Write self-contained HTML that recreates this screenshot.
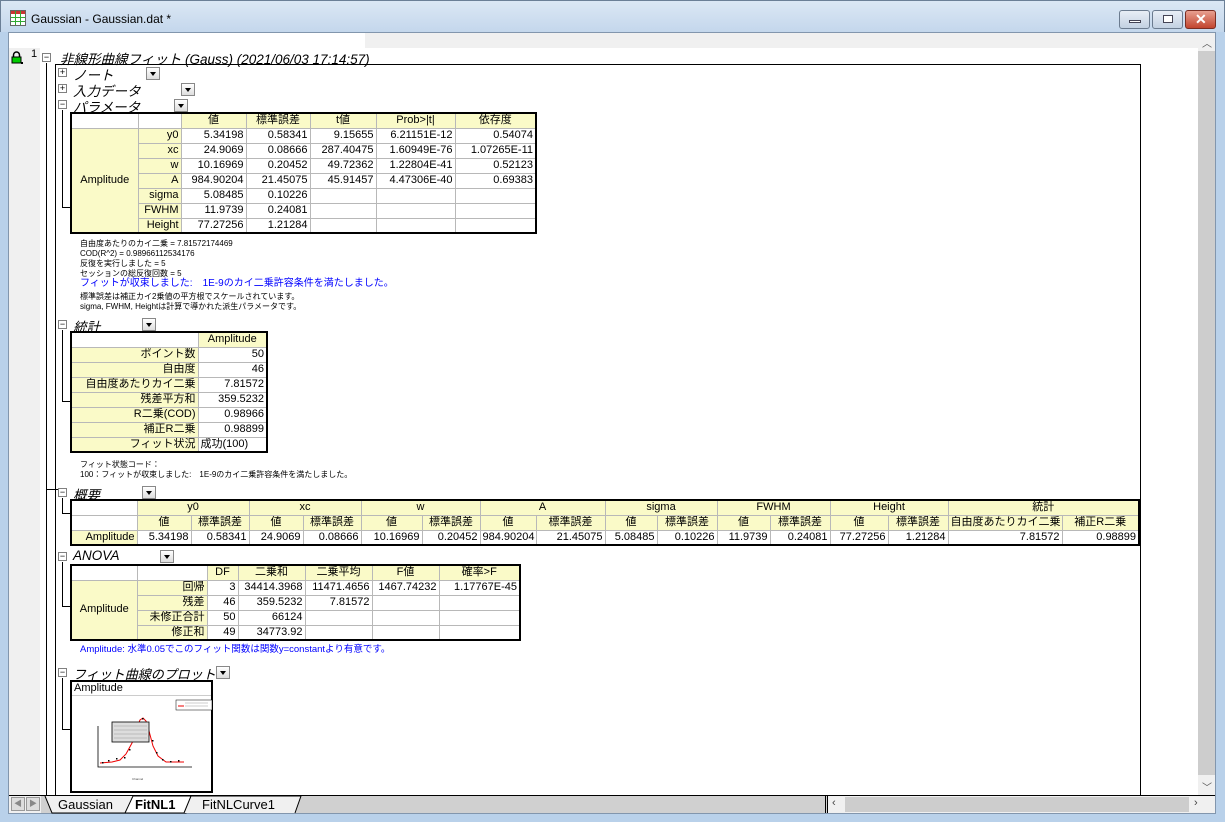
<!DOCTYPE html>
<html><head><meta charset="utf-8">
<style>
*{margin:0;padding:0;box-sizing:border-box}
body{width:1225px;height:822px;overflow:hidden;background:#b9d1ea;font-family:"Liberation Sans","Noto Sans CJK JP",sans-serif;position:relative}
.abs{position:absolute}
#title{left:0;top:0;width:1225px;height:32px;background:linear-gradient(#dbe7f4,#c4d7ec);border:1px solid #6b7f96;border-bottom:none}
#title span{position:absolute;left:30px;top:11px;font-size:12px;color:#000}
.wb{position:absolute;top:9px;height:19px;border:1px solid #6b7b8f;border-radius:3px;background:linear-gradient(#e8eef6,#c3d1e2)}
#client{left:8px;top:32px;width:1208px;height:782px;background:#fff;border:1px solid #8296ad}
#lstrip{left:9px;top:48px;width:31px;height:747px;background:#f0f0f0}
#tstrip{left:365px;top:33px;width:833px;height:15px;background:#f0f0f0}
#vs{left:1198px;top:33px;width:17px;height:762px;background:#f0f0f0}
#hs{left:9px;top:795px;width:1206px;height:18px;background:#f0f0f0;border-top:1px solid #000}
.sec{position:absolute;font-style:italic;font-size:13.5px;color:#000;white-space:nowrap}
.pm{position:absolute;width:9px;height:9px;border:1px solid #808080;background:#fff;font-size:9px;line-height:7px;text-align:center;color:#000}
.dd{position:absolute;width:14px;height:13px;border:1px solid #888;background:linear-gradient(#fff,#ddd)}
.dd:after{content:"";position:absolute;left:3px;top:4px;border-left:3.5px solid transparent;border-right:3.5px solid transparent;border-top:4px solid #000}
.ln{position:absolute;background:#000}
table{position:absolute;border-collapse:collapse;table-layout:fixed;border:2px solid #000;font-size:11px;background:#fff}
td{border:1px solid #b8b8b8;height:15px;padding:0 2px;text-align:right;white-space:nowrap;overflow:hidden;line-height:13px}
.y{background:#fafac8}
.c{text-align:center}
.note{position:absolute;font-size:8px;line-height:10px;color:#000;white-space:nowrap}
.blue{color:#0000ff}
</style></head><body>
<div id="title" class="abs">
<svg class="abs" style="left:9px;top:9px" width="16" height="16"><rect x="0.5" y="0.5" width="15" height="15" fill="#fff" stroke="#666"/><rect x="1" y="1" width="14" height="3" fill="#c33"/><path d="M1 7.5H15M1 11.5H15M5.5 1V15M10.5 1V15" stroke="#3a3" /></svg>
<span>Gaussian - Gaussian.dat *</span>
<div class="wb" style="left:1118px;width:31px"><div class="abs" style="left:9px;top:9px;width:12px;height:3px;background:#fff;border:1px solid #445"></div></div>
<div class="wb" style="left:1151px;width:31px"><div class="abs" style="left:10px;top:4px;width:10px;height:8px;border:1px solid #445;background:#fff"></div></div>
<div class="wb" style="left:1184px;width:31px;background:linear-gradient(#e8a090,#c2452f);border-color:#7a2d22"><span style="position:absolute;left:9px;top:0;color:#fff;font-weight:bold;font-size:14px">✕</span></div>
</div>
<div id="client" class="abs"></div>
<div id="tstrip" class="abs"></div>
<div id="lstrip" class="abs"></div>
<div id="vs" class="abs"><div class="abs" style="left:0;top:18px;width:17px;height:724px;background:#cdcdcd"></div><span class="abs" style="left:4px;top:2px;font-size:10px;color:#555">︿</span><span class="abs" style="left:4px;top:746px;font-size:10px;color:#555">﹀</span></div>
<div id="hs" class="abs">
<div class="abs" style="left:2px;top:1px;width:14px;height:14px;border:1px solid #999;background:#ddd;font-size:8px;text-align:center;line-height:12px;color:#888">◀</div>
<div class="abs" style="left:17px;top:1px;width:14px;height:14px;border:1px solid #999;background:#ddd;font-size:8px;text-align:center;line-height:12px;color:#888">▶</div>
<div class="abs" style="left:32px;top:0;width:787px;height:17px;background:#d0d0d0"></div>
<svg class="abs" style="left:32px;top:0" width="270" height="18"><path d="M4 0L11 17H88L92 8L95 0" fill="#f0f0f0" stroke="#000"/><path d="M84 17L92 0H150L145 17Z" fill="#fff" stroke="#000"/><path d="M143 17L150 0H260L254 17" fill="#f0f0f0" stroke="#000"/></svg>
<span class="abs" style="left:49px;top:1px;font-size:13px">Gaussian</span>
<span class="abs" style="left:126px;top:1px;font-size:13px;font-weight:bold">FitNL1</span>
<span class="abs" style="left:193px;top:1px;font-size:13px">FitNLCurve1</span>
<div class="abs" style="left:816px;top:0;width:3px;height:17px;border-left:1px solid #000;border-right:1px solid #000"></div>
<div class="abs" style="left:836px;top:1px;width:344px;height:15px;background:#cdcdcd"></div>
<span class="abs" style="left:823px;top:1px;font-size:11px;color:#444">‹</span>
<span class="abs" style="left:1185px;top:1px;font-size:11px;color:#444">›</span>
</div>

<svg class="abs" style="left:10px;top:51px" width="14" height="14"><path d="M3.5 6V4a3 3 0 0 1 6 0V6" fill="none" stroke="#000" stroke-width="1.5"/><rect x="2" y="6" width="9" height="6" fill="#0c0" stroke="#000"/><rect x="11" y="11" width="2" height="2" fill="#000"/></svg>
<span class="abs" style="left:31px;top:48px;font-size:11px">1</span>
<div class="pm" style="left:42px;top:53px">−</div>
<div class="sec" style="left:60px;top:48px">非線形曲線フィット (Gauss) (2021/06/03 17:14:57)</div>
<div class="ln" style="left:46px;top:63px;width:1px;height:732px"></div>
<div class="ln" style="left:55px;top:64px;width:1086px;height:1px"></div>
<div class="ln" style="left:55px;top:64px;width:1px;height:731px"></div>
<div class="ln" style="left:1140px;top:64px;width:1px;height:731px"></div>

<div class="pm" style="left:58px;top:68px">+</div><div class="sec" style="left:73px;top:64px">ノート</div><div class="dd" style="left:146px;top:67px"></div>
<div class="pm" style="left:58px;top:84px">+</div><div class="sec" style="left:73px;top:80px">入力データ</div><div class="dd" style="left:181px;top:83px"></div>
<div class="pm" style="left:58px;top:100px">−</div><div class="sec" style="left:73px;top:96px">パラメータ</div><div class="dd" style="left:174px;top:99px"></div>
<div class="ln" style="left:62px;top:110px;width:1px;height:97px"></div><div class="ln" style="left:62px;top:207px;width:8px;height:1px"></div>

<table style="left:70px;top:112px;width:467px">
<colgroup><col style="width:67px"><col style="width:43px"><col style="width:65px"><col style="width:64px"><col style="width:66px"><col style="width:79px"><col style="width:81px"></colgroup>
<tr><td></td><td></td><td class="y c">値</td><td class="y c">標準誤差</td><td class="y c">t値</td><td class="y c">Prob&gt;|t|</td><td class="y c">依存度</td></tr>
<tr><td class="y c" rowspan="7">Amplitude</td><td class="y">y0</td><td>5.34198</td><td>0.58341</td><td>9.15655</td><td>6.21151E-12</td><td>0.54074</td></tr>
<tr><td class="y">xc</td><td>24.9069</td><td>0.08666</td><td>287.40475</td><td>1.60949E-76</td><td>1.07265E-11</td></tr>
<tr><td class="y">w</td><td>10.16969</td><td>0.20452</td><td>49.72362</td><td>1.22804E-41</td><td>0.52123</td></tr>
<tr><td class="y">A</td><td>984.90204</td><td>21.45075</td><td>45.91457</td><td>4.47306E-40</td><td>0.69383</td></tr>
<tr><td class="y">sigma</td><td>5.08485</td><td>0.10226</td><td></td><td></td><td></td></tr>
<tr><td class="y">FWHM</td><td>11.9739</td><td>0.24081</td><td></td><td></td><td></td></tr>
<tr><td class="y">Height</td><td>77.27256</td><td>1.21284</td><td></td><td></td><td></td></tr>
</table>

<div class="note" style="left:80px;top:239px">自由度あたりのカイ二乗 = 7.81572174469<br>COD(R^2) = 0.98966112534176<br>反復を実行しました = 5<br>セッションの総反復回数 = 5</div>
<div class="note blue" style="left:80px;top:278px;font-size:10px;line-height:12px">フィットが収束しました:　1E-9のカイ二乗許容条件を満たしました。</div>
<div class="note" style="left:80px;top:292px">標準誤差は補正カイ2乗値の平方根でスケールされています。<br>sigma, FWHM, Heightは計算で導かれた派生パラメータです。</div>

<div class="pm" style="left:58px;top:320px">−</div><div class="sec" style="left:73px;top:316px">統計</div><div class="dd" style="left:142px;top:318px"></div>
<div class="ln" style="left:62px;top:330px;width:1px;height:72px"></div><div class="ln" style="left:62px;top:401px;width:8px;height:1px"></div>
<table style="left:70px;top:331px;width:196px">
<colgroup><col style="width:127px"><col style="width:69px"></colgroup>
<tr><td></td><td class="y c">Amplitude</td></tr>
<tr><td class="y">ポイント数</td><td>50</td></tr>
<tr><td class="y">自由度</td><td>46</td></tr>
<tr><td class="y">自由度あたりカイ二乗</td><td>7.81572</td></tr>
<tr><td class="y">残差平方和</td><td>359.5232</td></tr>
<tr><td class="y">R二乗(COD)</td><td>0.98966</td></tr>
<tr><td class="y">補正R二乗</td><td>0.98899</td></tr>
<tr><td class="y">フィット状況</td><td style="text-align:left">成功(100)</td></tr>
</table>
<div class="note" style="left:80px;top:460px">フィット状態コード：<br>100：フィットが収束しました:　1E-9のカイ二乗許容条件を満たしました。</div>

<div class="pm" style="left:58px;top:488px">−</div><div class="sec" style="left:73px;top:484px">概要</div><div class="dd" style="left:142px;top:486px"></div>
<div class="ln" style="left:62px;top:498px;width:1px;height:16px"></div><div class="ln" style="left:62px;top:513px;width:8px;height:1px"></div>
<div class="ln" style="left:46px;top:489px;width:12px;height:1px"></div>
<table style="left:70px;top:499px;width:1067px">
<colgroup><col style="width:66px"><col style="width:54px"><col style="width:58px"><col style="width:54px"><col style="width:58px"><col style="width:61px"><col style="width:58px"><col style="width:56px"><col style="width:69px"><col style="width:52px"><col style="width:60px"><col style="width:53px"><col style="width:60px"><col style="width:58px"><col style="width:60px"><col style="width:114px"><col style="width:77px"></colgroup>
<tr><td></td><td class="y c" colspan="2">y0</td><td class="y c" colspan="2">xc</td><td class="y c" colspan="2">w</td><td class="y c" colspan="2">A</td><td class="y c" colspan="2">sigma</td><td class="y c" colspan="2">FWHM</td><td class="y c" colspan="2">Height</td><td class="y c" colspan="2">統計</td></tr>
<tr><td></td><td class="y c">値</td><td class="y c">標準誤差</td><td class="y c">値</td><td class="y c">標準誤差</td><td class="y c">値</td><td class="y c">標準誤差</td><td class="y c">値</td><td class="y c">標準誤差</td><td class="y c">値</td><td class="y c">標準誤差</td><td class="y c">値</td><td class="y c">標準誤差</td><td class="y c">値</td><td class="y c">標準誤差</td><td class="y c">自由度あたりカイ二乗</td><td class="y c">補正R二乗</td></tr>
<tr><td class="y">Amplitude</td><td>5.34198</td><td>0.58341</td><td>24.9069</td><td>0.08666</td><td>10.16969</td><td>0.20452</td><td>984.90204</td><td>21.45075</td><td>5.08485</td><td>0.10226</td><td>11.9739</td><td>0.24081</td><td>77.27256</td><td>1.21284</td><td>7.81572</td><td>0.98899</td></tr>
</table>

<div class="pm" style="left:58px;top:552px">−</div><div class="sec" style="left:73px;top:548px">ANOVA</div><div class="dd" style="left:160px;top:550px"></div>
<div class="ln" style="left:62px;top:562px;width:1px;height:45px"></div><div class="ln" style="left:62px;top:606px;width:8px;height:1px"></div>
<table style="left:70px;top:564px;width:449px">
<colgroup><col style="width:66px"><col style="width:70px"><col style="width:31px"><col style="width:67px"><col style="width:67px"><col style="width:67px"><col style="width:81px"></colgroup>
<tr><td></td><td></td><td class="y c">DF</td><td class="y c">二乗和</td><td class="y c">二乗平均</td><td class="y c">F値</td><td class="y c">確率&gt;F</td></tr>
<tr><td class="y c" rowspan="4">Amplitude</td><td class="y">回帰</td><td>3</td><td>34414.3968</td><td>11471.4656</td><td>1467.74232</td><td>1.17767E-45</td></tr>
<tr><td class="y">残差</td><td>46</td><td>359.5232</td><td>7.81572</td><td></td><td></td></tr>
<tr><td class="y">未修正合計</td><td>50</td><td>66124</td><td></td><td></td><td></td></tr>
<tr><td class="y">修正和</td><td>49</td><td>34773.92</td><td></td><td></td><td></td></tr>
</table>
<div class="note blue" style="left:80px;top:645px;font-size:9.5px">Amplitude: 水準0.05でこのフィット関数は関数y=constantより有意です。</div>

<div class="pm" style="left:58px;top:668px">−</div><div class="sec" style="left:73px;top:664px;font-size:13px">フィット曲線のプロット</div><div class="dd" style="left:216px;top:666px"></div>
<div class="ln" style="left:62px;top:678px;width:1px;height:52px"></div><div class="ln" style="left:62px;top:729px;width:8px;height:1px"></div>
<div class="abs" style="left:70px;top:680px;width:143px;height:113px;border:2px solid #000;background:#fff">
<div style="font-size:11px;padding-left:2px;border-bottom:1px solid #ccc;height:14px;line-height:13px">Amplitude</div>
<svg class="abs" style="left:0;top:14px" width="140" height="95">
<rect x="104" y="4" width="36" height="10" fill="#fff" stroke="#000" stroke-width="0.5"/>
<path d="M106 10H112" stroke="#e00"/><path d="M113 7H136M113 10H136" stroke="#999" stroke-width="0.6"/>
<path d="M26 30V71H120" fill="none" stroke="#000" stroke-width="0.8"/>
<path d="M28 67L40 66L48 64L54 58L60 47L65 31L68 24L71 22L74 25L77 35L81 50L86 60L94 66L112 66" fill="none" stroke="#e00" stroke-width="1"/>
<g fill="#000"><rect x="30" y="66" width="1.5" height="1.5"/><rect x="36" y="64" width="1.5" height="1.5"/><rect x="44" y="62" width="1.5" height="1.5"/><rect x="52" y="61" width="1.5" height="1.5"/><rect x="57" y="53" width="1.5" height="1.5"/><rect x="62" y="43" width="1.5" height="1.5"/><rect x="70" y="22" width="1.5" height="1.5"/><rect x="80" y="44" width="1.5" height="1.5"/><rect x="84" y="56" width="1.5" height="1.5"/><rect x="90" y="63" width="1.5" height="1.5"/><rect x="98" y="65" width="1.5" height="1.5"/><rect x="106" y="64" width="1.5" height="1.5"/></g>
<rect x="40" y="26" width="37" height="20" fill="#ddd" stroke="#000" stroke-width="0.8"/>
<path d="M42 30H75M42 34H75M42 38H75M42 42H75" stroke="#999" stroke-width="0.5"/>
<text x="60" y="84" font-size="3" fill="#444">Channel</text>
</svg>
</div>
</body></html>
